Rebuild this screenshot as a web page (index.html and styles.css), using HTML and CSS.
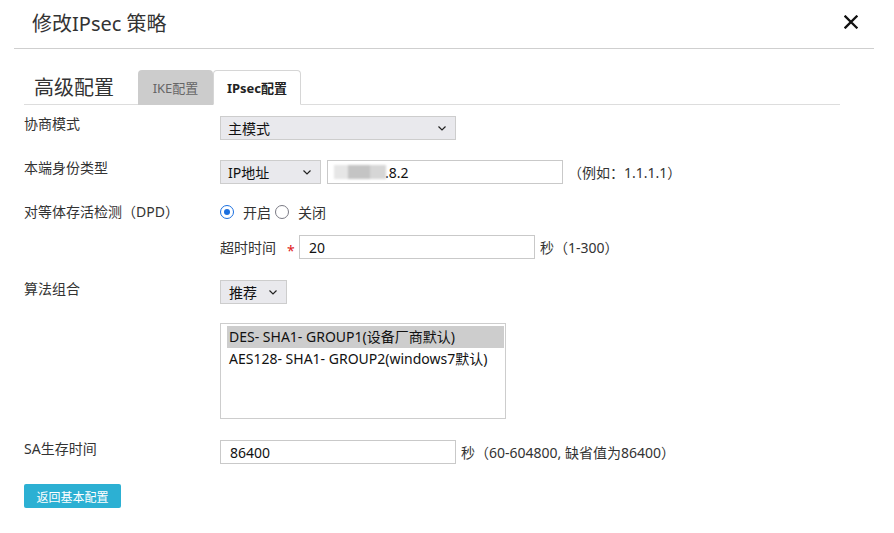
FILE: index.html
```html
<!DOCTYPE html>
<html lang="zh-CN">
<head>
<meta charset="utf-8">
<title>修改IPsec 策略</title>
<link rel="stylesheet" href="styles.css">
</head>
<body>
<div class="dialog">
  <div class="dlg-head">
    <div class="dlg-title">修改IPsec 策略</div>
    <svg class="close" width="14" height="14" viewBox="0 0 14 14"><path d="M1.5 1.5 L12.5 12.5 M12.5 1.5 L1.5 12.5" stroke="#111" stroke-width="2.3" stroke-linecap="square"/></svg>
  </div>
  <div class="content">
    <div class="tabbar">
      <div class="tab-heading">高级配置</div>
      <div class="tab tab-ike">IKE配置</div>
      <div class="tab tab-active">IPsec配置</div>
    </div>
    <div class="form">
      <div class="row r1">
        <div class="label">协商模式</div>
        <div class="field">
          <div class="select sel-wide"><span>主模式</span><svg class="chev" width="8" height="5" viewBox="0 0 8 5"><polyline points="0.5,0.5 4,4 7.5,0.5" fill="none" stroke="#222" stroke-width="1.2"/></svg></div>
        </div>
      </div>
      <div class="row r2">
        <div class="label">本端身份类型</div>
        <div class="field">
          <div class="select sel-ip"><span>IP地址</span><svg class="chev" width="8" height="5" viewBox="0 0 8 5"><polyline points="0.5,0.5 4,4 7.5,0.5" fill="none" stroke="#222" stroke-width="1.2"/></svg></div>
          <div class="input inp-ip"><span class="blur"><i class="b1"></i><i class="b2"></i><i class="b3"></i></span><span class="ip-tail">.8.2</span></div>
          <span class="hint">（例如：1.1.1.1）</span>
        </div>
      </div>
      <div class="row r3">
        <div class="label">对等体存活检测（DPD）</div>
        <div class="field radios">
          <span class="radio checked"></span><span class="rtext">开启</span>
          <span class="radio"></span><span class="rtext">关闭</span>
        </div>
      </div>
      <div class="row r4">
        <div class="label"></div>
        <div class="field">
          <span class="sublabel">超时时间</span><span class="star">*</span>
          <div class="input inp-time">20</div>
          <span class="hint">秒（1-300）</span>
        </div>
      </div>
      <div class="row r5">
        <div class="label">算法组合</div>
        <div class="field">
          <div class="select sel-small"><span>推荐</span><svg class="chev" width="8" height="5" viewBox="0 0 8 5"><polyline points="0.5,0.5 4,4 7.5,0.5" fill="none" stroke="#222" stroke-width="1.2"/></svg></div>
        </div>
      </div>
      <div class="row r6">
        <div class="label"></div>
        <div class="field">
          <div class="listbox">
            <div class="opt selected">DES- SHA1- GROUP1(设备厂商默认)</div>
            <div class="opt">AES128- SHA1- GROUP2(windows7默认)</div>
          </div>
        </div>
      </div>
      <div class="row r7">
        <div class="label">SA生存时间</div>
        <div class="field">
          <div class="input inp-sa">86400</div>
          <span class="hint">秒（60-604800, 缺省值为86400）</span>
        </div>
      </div>
      <div class="actions">
        <button class="btn">返回基本配置</button>
      </div>
    </div>
  </div>
</div>
</body>
</html>
```
FILE: styles.css
```css
* { box-sizing: border-box; }
html, body { margin: 0; padding: 0; background: #fff; }
body {
  font-family: "Noto Sans", "Noto Sans CJK SC", sans-serif;
  color: #333;
  font-size: 14px;
}
.dialog { width: 894px; height: 533px; }
.dlg-head {
  margin: 0 20px 0 14px;
  height: 49px;
  border-bottom: 1px solid #cfcfcf;
  display: flex;
  align-items: center;
  justify-content: space-between;
  padding: 0 16px 2px 18px;
}
.dlg-title { font-size: 20px; color: #333; line-height: 24px; padding-top: 2px; }
.close { margin-top: -2px; }
.content { padding: 0 0 0 24px; }
.tabbar {
  width: 816px;
  margin-top: 20px;
  height: 36px;
  border-bottom: 1px solid #ddd;
  display: flex;
  align-items: flex-end;
}
.tab-heading {
  align-self: center;
  font-size: 20px;
  line-height: 24px;
  padding-left: 10px;
  width: 114px;
  color: #333;
  margin-bottom: -2px;
}
.tab {
  height: 35px;
  font-size: 13px;
  display: flex;
  align-items: center;
  justify-content: center;
  border-radius: 4px 4px 0 0;
  margin-bottom: -1px;
}
.tab-ike { width: 75px; background: #cccccc; color: #666; }
.tab-active { width: 88px; background: #fff; border: 1px solid #d6d6d6; border-bottom-color: #fff; font-weight: bold; color: #222; height: 35px; }
.form { padding-top: 11px; }
.row { display: flex; align-items: flex-start; }
.label { width: 196px; flex: none; line-height: 16px; padding-top: 0; font-size: 14px; color: #333; }
.field { display: flex; align-items: center; }
.r1 { height: 24px; }
.r2 { height: 24px; margin-top: 20px; }
.r3 { height: 16px; margin-top: 20px; }
.r4 { height: 24px; margin-top: 15px; }
.r5 { height: 24px; margin-top: 21px; }
.r5 .label { padding-top: 1px; }
.r6 { margin-top: 19px; }
.r7 { height: 24px; margin-top: 21px; }
.r7 .label { padding-top: 1px; }
.select {
  height: 24px;
  background: #e9e9ed;
  border: 1px solid #cdcdcd;
  display: flex;
  align-items: center;
  justify-content: space-between;
  padding: 0 9px 0 7px;
  font-size: 14px;
  color: #111;
}
.sel-wide { width: 236px; }
.sel-ip { width: 101px; }
.sel-small { width: 67px; padding-left: 8px; }
.input {
  height: 24px;
  border: 1px solid #c9c9c9;
  background: #fff;
  display: flex;
  align-items: center;
  padding: 0 9px;
  font-size: 14px;
  color: #111;
}
.inp-ip { width: 236px; margin-left: 6px; padding-left: 6px; }
.blur { display: inline-flex; height: 14px; filter: blur(1px); }
.blur i { display: block; height: 14px; }
.blur .b1 { width: 14px; background: #e6e6e6; }
.blur .b2 { width: 22px; background: #c4c4c4; }
.blur .b3 { width: 16px; background: #d6d6d6; }
.ip-tail { margin-left: -1px; }
.hint { margin-left: 5px; font-size: 14px; color: #333; }
.radios { height: 16px; }
.radio {
  width: 14px; height: 14px; border-radius: 50%;
  border: 1.5px solid #7a7a84; display: inline-block; background: #fff;
}
.radio.checked { border: 1.5px solid #1a6fe0; position: relative; }
.radio.checked::after {
  content: ""; position: absolute; left: 2.5px; top: 2.5px;
  width: 6px; height: 6px; border-radius: 50%; background: #1a6fe0;
}
.rtext { margin: 0 2px 0 9px; }
.rtext + .radio { margin-left: 2px; }
.sublabel { width: 67px; }
.star { color: #e02020; width: 12px; font-size: 14px; position: relative; top: 3px; }
.inp-time { width: 236px; }
.inp-sa { width: 236px; }
.listbox {
  width: 286px; height: 96px;
  border: 1px solid #cdcdcd;
  padding: 2px 1px 0 6px;
}
.opt { height: 22px; line-height: 22px; padding-left: 2px; font-size: 14px; color: #111; white-space: nowrap; }
.opt.selected { background: #cdcdcd; }
.actions { margin-top: 20px; }
.btn {
  width: 97px; height: 24px;
  background: #2cb0d3;
  color: #fff;
  border: none;
  border-radius: 2px;
  font-family: "Noto Sans CJK SC", sans-serif;
  font-size: 12px;
  padding: 0;
}
```
